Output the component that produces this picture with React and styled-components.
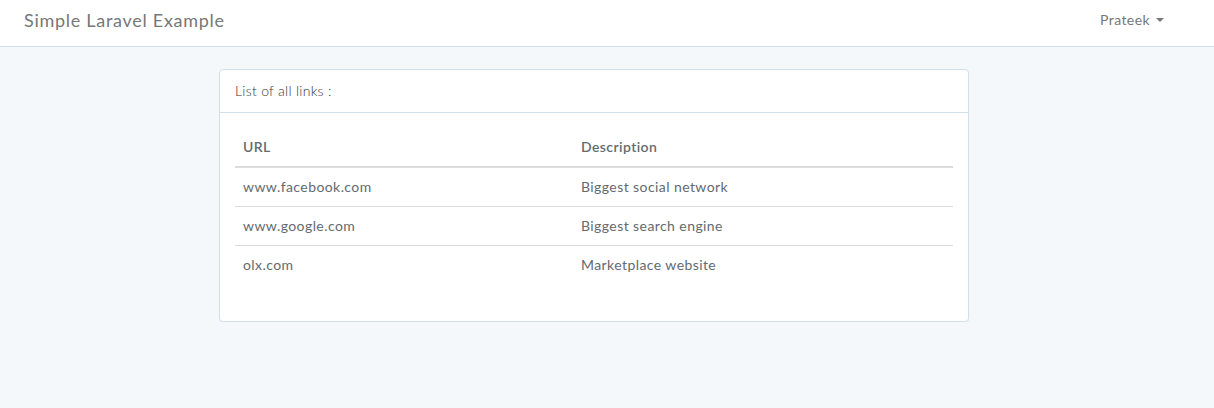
import React from "react";
import styled, { createGlobalStyle } from "styled-components";

const Global = createGlobalStyle`
  html, body { margin: 0; padding: 0; }
  body {
    background: #f5f8fa;
    font-family: "Lato", "Open Sans", sans-serif;
    font-size: 14px;
    font-weight: 400;
    line-height: 1.6;
    letter-spacing: 0.03em;
    color: #636b6f;
  }
  * { box-sizing: border-box; }
`;

const Navbar = styled.nav`
  height: 47px;
  background: #fff;
  border-bottom: 1px solid #d3e0e9;
  display: flex;
  align-items: center;
  justify-content: space-between;
  padding: 0 50px 0 24px;
`;

const Brand = styled.a`
  font-size: 18px;
  letter-spacing: 0.04em;
  color: #777;
  text-decoration: none;
  margin-top: -6px;
`;

const UserMenu = styled.a`
  display: flex;
  align-items: center;
  gap: 6px;
  color: #777;
  font-size: 14px;
  text-decoration: none;
  margin-top: -6px;
`;

const Caret = styled.span`
  width: 0;
  height: 0;
  border-left: 4px solid transparent;
  border-right: 4px solid transparent;
  border-top: 4px solid #777;
`;

const Main = styled.main`
  display: flex;
  padding: 22px 0 0 219px;
`;

const Panel = styled.section`
  width: 750px;
  background: #fff;
  border: 1px solid #d3e0e9;
  border-radius: 4px;
  box-shadow: 0 1px 1px rgba(0, 0, 0, 0.05);
`;

const PanelHeading = styled.div`
  height: 43px;
  padding: 10px 15px;
  border-bottom: 1px solid #d3e0e9;
  color: #333;
  font-weight: 300;
  letter-spacing: 0.02em;
`;

const PanelBody = styled.div`
  padding: 15px;
`;

const Table = styled.table`
  width: 100%;
  border-collapse: collapse;
  margin-bottom: 22px;
  line-height: 22px;
`;

const Th = styled.th`
  text-align: left;
  font-weight: 600;
  padding: 8px;
  border-bottom: 2px solid #ddd;
  width: ${(p) => p.$w || "auto"};
`;

const Td = styled.td`
  padding: 8px;
  border-top: ${(p) => (p.$first ? "none" : "1px solid #ddd")};
`;

const links = [
  { url: "www.facebook.com", desc: "Biggest social network" },
  { url: "www.google.com", desc: "Biggest search engine" },
  { url: "olx.com", desc: "Marketplace website" },
];

export default function App() {
  return (
    <>
      <Global />
      <Navbar>
        <Brand href="#">Simple Laravel Example</Brand>
        <UserMenu href="#">
          Prateek <Caret />
        </UserMenu>
      </Navbar>
      <Main>
        <Panel>
          <PanelHeading>List of all links :</PanelHeading>
          <PanelBody>
            <Table>
              <thead>
                <tr>
                  <Th $w="338px">URL</Th>
                  <Th>Description</Th>
                </tr>
              </thead>
              <tbody>
                {links.map((l, i) => (
                  <tr key={l.url}>
                    <Td $first={i === 0}>{l.url}</Td>
                    <Td $first={i === 0}>{l.desc}</Td>
                  </tr>
                ))}
              </tbody>
            </Table>
          </PanelBody>
        </Panel>
      </Main>
    </>
  );
}
